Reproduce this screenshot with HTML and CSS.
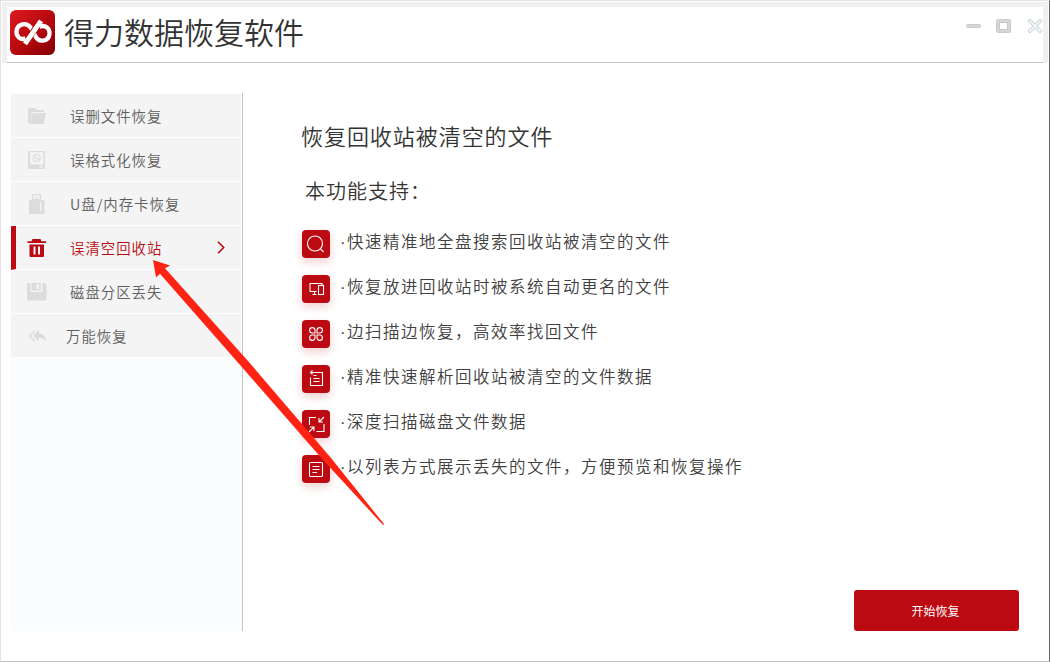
FILE: index.html
```html
<!DOCTYPE html>
<html lang="zh-CN">
<head>
    <meta charset="UTF-8">
    <meta name="viewport" content="width=device-width, initial-scale=1.0">
    <title>得力数据恢复软件</title>
    <link rel="stylesheet" href="styles.css">
</head>
<body>
    <div class="window">
        <header class="titlebar">
            <svg class="logo" viewBox="0 0 45 45">
                <defs>
                    <linearGradient id="logo-bg" x1="0" y1="0" x2="1" y2="1">
                        <stop offset="0" stop-color="#dc1c20"/>
                        <stop offset="0.5" stop-color="#b9090f"/>
                        <stop offset="1" stop-color="#820004"/>
                    </linearGradient>
                </defs>
                <rect width="45" height="45" rx="6" fill="url(#logo-bg)"/>
                <path d="M15.500 28.300C10.500 30.500 6.200 26.500 6.500 21.500C7 13.500 16.500 11.500 21 18L25 25.500C28.500 33 38.500 32 39.500 24C40 18 35 14.500 29.500 16.800" fill="none" stroke="#fff" stroke-width="4.300"/>
                <path d="M18.500 28.500L28 14.500" fill="none" stroke="#b0080d" stroke-width="6"/>
                <path d="M15 33.800L31 10.800" fill="none" stroke="#fff" stroke-width="4.900"/>
            </svg>
            <h1 class="title">得力数据恢复软件</h1>
            <div class="controls">
                <svg viewBox="0 0 15 4" class="minimize"><rect x="0.5" y="0.5" width="14" height="3" rx="1" fill="#d6d6d6" stroke="#c9cbcd"/></svg>
                <svg viewBox="0 0 15 14" class="maximize"><rect x="0.5" y="0.5" width="14" height="13" rx="1" fill="#d6d6d6" stroke="#c9cbcd"/><rect x="3.500" y="3.500" width="8" height="7" fill="#fff" stroke="#c5c7c9"/></svg>
                <svg viewBox="0 0 14 14" class="close"><path d="M2 2l10 10M12 2L2 12" stroke="#c9cdd0" stroke-width="3.8" stroke-linecap="round"/><path d="M2 2l10 10M12 2L2 12" stroke="#f0f7fc" stroke-width="2" stroke-linecap="round"/></svg>
            </div>
        </header>

        <main class="content">
            <nav class="sidebar">
                <a class="item">
                    <svg class="item-icon" viewBox="0 0 20 20"><path d="M1 17V3q0-1 1-1h6l2 2h6q1 0 1 1v1H5L3 17z"/><path d="M5.500 7H19l-2.200 11H3z"/></svg>
                    <span>误删文件恢复</span>
                </a>
                <a class="item">
                    <svg class="item-icon" viewBox="0 0 20 20"><path fill-rule="evenodd" d="M2 1h15q1 0 1 1v16q0 1-1 1H2q-1 0-1-1V2q0-1 1-1zM3 2.200V14.500H16.500V2.200zM12.500 16v1.600h3V16z"/><circle cx="9.700" cy="8" r="3.500" fill="none" stroke="#dcdcdc" stroke-width="1.200"/><path d="M7.300 5.600l5 4.800" stroke="#dcdcdc" stroke-width="1.200"/></svg>
                    <span>误格式化恢复</span>
                </a>
                <a class="item">
                    <svg class="item-icon" viewBox="0 0 20 20"><path fill-rule="evenodd" d="M5 0h9v6h2q1.500 0 1.500 1.500v11q0 1.500-1.500 1.500H3.500Q2 20 2 18.500v-11Q2 6 3.500 6H5zM6.200 1.200V5h6.600V1.200zM13 8v9h1.200V8z"/><path d="M8 3h3v1.200H8z"/></svg>
                    <span>U盘/内存卡恢复</span>
                </a>
                <a class="item active">
                    <svg class="item-icon" viewBox="0 0 20 20"><path fill-rule="evenodd" d="M5.500 1h8l1 2.300H19V5H.5V3.300H4.500zM2.500 6.500H17V18q0 1-1 1H3.500q-1 0-1-1zM6.500 8.500v8h2v-8zM11 8.500v8h2v-8z"/></svg>
                    <span>误清空回收站</span>
                    <svg class="chevron" viewBox="0 0 8 13"><path d="M1 0.800l5.700 5.700L1 12.200"/></svg>
                </a>
                <a class="item">
                    <svg class="item-icon" viewBox="0 0 20 20"><path fill-rule="evenodd" d="M0 1h3.500v9h12V1H18l1.500 1.500V17q0 1.500-1.500 1.500H1.500Q0 18.500 0 17z"/><path d="M4.500 1H14v7.500H4.500zM9.500 2v5h2.500V2z" fill-rule="evenodd"/></svg>
                    <span>磁盘分区丢失</span>
                </a>
                <a class="item last">
                    <svg class="item-icon" viewBox="0 0 20 20"><path d="M8 4.500L2.500 10L8 15.500" fill="none" stroke="#dcdcdc" stroke-width="1.600"/><path d="M12 4v3.500c5 .2 7 3.500 7 8-1.500-2.500-3.500-3.500-7-3.500v3.500L6 10z"/></svg>
                    <span>万能恢复</span>
                </a>
            </nav>

            <section class="panel">
                <h2 class="heading">恢复回收站被清空的文件</h2>
                <h3 class="subheading">本功能支持：</h3>
                <ul class="features">
                    <li>
                        <svg class="badge" viewBox="0 0 28 28"><circle cx="13" cy="13.500" r="7.500"/><path d="M18.500 19l3.200 3.200"/></svg>
                        <span>·快速精准地全盘搜索回收站被清空的文件</span>
                    </li>
                    <li>
                        <svg class="badge" viewBox="0 0 28 28"><path d="M14.500 16.500H8V8.500h12v1.500M12.500 16.500v2.500M10.500 19.500h4"/><rect x="16.500" y="10.500" width="5" height="9"/></svg>
                        <span>·恢复放进回收站时被系统自动更名的文件</span>
                    </li>
                    <li>
                        <svg class="badge" viewBox="0 0 28 28"><path d="M13 13h-2.800a2.700 2.700 0 1 1 2.800-2.800zM15 13v-2.800a2.700 2.700 0 1 1 2.800 2.800zM13 15v2.800a2.700 2.700 0 1 1-2.800-2.800zM15 15h2.800a2.700 2.700 0 1 1-2.800 2.800z"/></svg>
                        <span>·边扫描边恢复，高效率找回文件</span>
                    </li>
                    <li>
                        <svg class="badge" viewBox="0 0 28 28"><path d="M10.500 5.500l-2 2 2 2M8.500 7.500h12v13h-12v-8M11.500 10.500h3M11.500 13.500h6M11.500 16.500h6"/></svg>
                        <span>·精准快速解析回收站被清空的文件数据</span>
                    </li>
                    <li>
                        <svg class="badge" viewBox="0 0 28 28"><path d="M14 7.500H7.500V15M22 14v7.500h-7.500M22 7l-4.500 4.500M17 8v4h4M7 22l4.500-4.500M8 17h4v4"/></svg>
                        <span>·深度扫描磁盘文件数据</span>
                    </li>
                    <li>
                        <svg class="badge" viewBox="0 0 28 28"><rect x="7.500" y="7.500" width="13" height="14" rx="1"/><path d="M10.500 11.500h7M10.500 14.500h7M10.500 17.500h4.500"/></svg>
                        <span>·以列表方式展示丢失的文件，方便预览和恢复操作</span>
                    </li>
                </ul>
                <button class="start">开始恢复</button>
            </section>
        </main>

        <svg class="pointer" viewBox="0 0 232 266">
            <path d="M0 0L17 5.500L12 8.200L95 101L178 198L231 264L230 265L171 201L87.500 105.500L7 13.700L3 17.500Z"/>
        </svg>
    </div>
</body>
</html>
```
FILE: styles.css
```css
:root {
    --primary-color: #bb0a11;
    --text-color: #333;
    --icon-color: #dcdcdc;
}

* {
    margin: 0;
    padding: 0;
    box-sizing: border-box;
    font-family: 'Noto Sans CJK SC', sans-serif;
}

body {
    background-color: #fff;
    color: var(--text-color);
}

.window {
    position: relative;
    display: flex;
    flex-direction: column;
    width: 1050px;
    height: 662px;
    border: 1px solid #e3e3e3;
    border-right-color: #696969;
    border-bottom-color: #c4c4c4;
    padding: 1px 1px 0;
    overflow: hidden;
}

.titlebar {
    display: flex;
    align-items: flex-start;
    height: 61px;
    border: 5px solid #f0f0f0;
    border-bottom: 0;
    padding: 3px 1px 0 3px;
    box-shadow: inset 0 -1px 0 #c4c4c4;
}

.logo {
    width: 45px;
    height: 45px;
}

.title {
    margin-left: 9px;
    font-size: 30px;
    font-weight: 350;
    line-height: 43px;
}

.controls {
    display: flex;
    align-items: center;
    gap: 15px;
    margin: 9px 0 0 auto;
}

.minimize {
    width: 15px;
    height: 4px;
}

.maximize {
    width: 15px;
    height: 14px;
}

.close {
    width: 14px;
    height: 14px;
    margin-left: 2px;
}

.content {
    display: flex;
    flex: 1;
    padding: 30px 29px 30px 9px;
}

.sidebar {
    width: 232px;
    background-color: #fbfcfe;
    border-right: 1px solid #c4c4c4;
    padding-top: 1px;
}

.item {
    display: flex;
    align-items: center;
    height: 44px;
    margin-right: 1px;
    padding: 0 16px;
    background-color: #f4f4f4;
    border-bottom: 1px solid #fff;
    color: #606060;
    font-size: 14.4px;
    font-weight: 350;
    letter-spacing: 1px;
}

.item span {
    margin: -1px 0 0 23px;
}

.item-icon {
    width: 20px;
    height: 20px;
    fill: var(--icon-color);
}

.item.active {
    border-left: 5px solid var(--primary-color);
    padding-left: 11px;
    color: var(--primary-color);
}

.item.active .item-icon {
    fill: var(--primary-color);
}

.item.last span {
    margin-left: 19px;
}

.chevron {
    width: 8px;
    height: 13px;
    margin-left: auto;
    fill: none;
    stroke: var(--primary-color);
    stroke-width: 1.6;
}

.panel {
    display: flex;
    flex-direction: column;
    flex: 1;
    padding: 26px 0 0 58px;
}

.heading {
    font-size: 22px;
    font-weight: 350;
    line-height: 32px;
    letter-spacing: 0.95px;
}

.subheading {
    margin: 25px 0 0 4px;
    font-size: 20px;
    font-weight: 350;
    line-height: 30px;
    letter-spacing: 1px;
}

.features {
    margin-top: 15px;
    list-style: none;
}

.features li {
    display: flex;
    align-items: center;
    height: 45px;
    color: #404040;
    font-size: 16.5px;
    font-weight: 350;
    letter-spacing: 1.5px;
}

.features span {
    margin: -5px 0 0 10px;
    font-family: 'Liberation Sans', 'Noto Sans CJK SC', sans-serif;
}

.badge {
    width: 28px;
    height: 28px;
    margin-left: 1px;
    border-radius: 4px;
    background-color: var(--primary-color);
    box-shadow: 0 4px 10px rgba(187, 10, 17, 0.2);
    fill: none;
    stroke: #fff;
    stroke-width: 1.1;
}

.start {
    align-self: flex-end;
    width: 165px;
    height: 41px;
    margin-top: auto;
    border: 0;
    border-radius: 3px;
    background-color: var(--primary-color);
    color: #fff;
    font-size: 12px;
    font-weight: 400;
    padding: 0 2px 1px 0;
}

/* arrow drawn over the window */
.pointer {
    position: absolute;
    left: 152px;
    top: 259px;
    width: 232px;
    height: 266px;
    fill: #ff2314;
    pointer-events: none;
}
```
